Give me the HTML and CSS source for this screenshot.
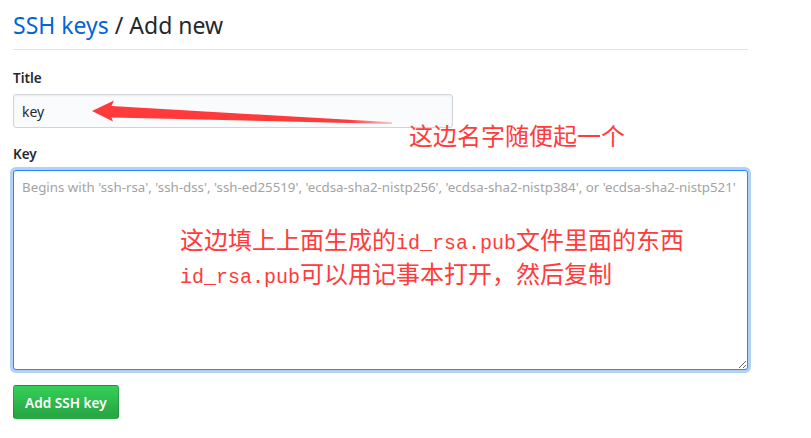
FILE: index.html
```html
<!DOCTYPE html>
<html lang="zh-CN">
<head>
<meta charset="utf-8">
<title>SSH keys / Add new</title>
<link rel="stylesheet" href="styles.css">
</head>
<body>
<div class="page">
  <h2 class="subhead"><a class="crumb" href="#">SSH keys</a> / Add new</h2>
  <form class="form">
    <div class="group">
      <label class="label" for="title">Title</label>
      <input class="input" id="title" type="text" value="key">
    </div>
    <div class="group group-key">
      <label class="label" for="key">Key</label>
      <textarea class="textarea" id="key" placeholder="Begins with 'ssh-rsa', 'ssh-dss', 'ssh-ed25519', 'ecdsa-sha2-nistp256', 'ecdsa-sha2-nistp384', or 'ecdsa-sha2-nistp521'"></textarea>
    </div>
    <button class="btn" type="button">Add SSH key</button>
  </form>

  <svg class="arrow" width="811" height="438" viewBox="0 0 811 438">
    <defs>
      <linearGradient id="fade" x1="92" y1="0" x2="394" y2="0" gradientUnits="userSpaceOnUse">
        <stop offset="0" stop-color="#ff3a3a"/>
        <stop offset="0.85" stop-color="#ff3a3a"/>
        <stop offset="1" stop-color="#ff3a3a" stop-opacity="0.25"/>
      </linearGradient>
    </defs>
    <polygon points="92,111 114,100.5 111.5,106 392,122.3 392,124 111.5,117.5 113,121.5" fill="url(#fade)"/>
  </svg>

  <div class="note note-title">这边名字随便起一个</div>
  <div class="note note-key">
    <div>这边填上上面生成的<span class="mono">id_rsa.pub</span>文件里面的东西</div>
    <div><span class="mono">id_rsa.pub</span>可以用记事本打开，然后复制</div>
  </div>
</div>
</body>
</html>
```

FILE: styles.css
```css
* { box-sizing: border-box; }

html, body {
  margin: 0;
  padding: 0;
  background: #fff;
}

body {
  font-family: "Noto Sans", "Liberation Sans", sans-serif;
  color: #24292e;
  font-size: 14px;
}

.page {
  position: relative;
  width: 811px;
  height: 438px;
  padding: 10px 0 0 13px;
  overflow: hidden;
}

.subhead {
  width: 735px;
  margin: 0;
  font-size: 23px;
  line-height: 30px;
  font-weight: 400;
  padding-bottom: 9px;
  border-bottom: 1px solid #e1e4e8;
}

.crumb {
  color: #0366d6;
  text-decoration: none;
}

.form {
  display: flex;
  flex-direction: column;
  align-items: flex-start;
}

.group {
  display: flex;
  flex-direction: column;
  margin-top: 18px;
}

.group-key {
  margin-top: 16px;
}

.label {
  font-weight: 600;
  font-size: 13.5px;
  line-height: 21px;
  margin-bottom: 5px;
}

.input {
  width: 440px;
  height: 34px;
  padding: 6px 8px;
  font-family: inherit;
  font-size: 14px;
  color: #24292e;
  background: #fafbfc;
  border: 1px solid #d1d5da;
  border-radius: 3px;
  box-shadow: inset 0 1px 2px rgba(27, 31, 35, 0.075);
  outline: none;
}

.textarea {
  width: 735px;
  height: 200px;
  padding: 6px 8px;
  font-family: inherit;
  font-size: 13.3px;
  line-height: 20px;
  color: #24292e;
  background: #fff;
  border: 1px solid #2188ff;
  border-radius: 3px;
  box-shadow: 0 0 0 3px rgba(3, 102, 214, 0.3);
  outline: none;
  resize: both;
}

.textarea::placeholder {
  color: #a3a3a3;
}

.btn {
  margin-top: 15px;
  height: 34px;
  padding: 0 11px;
  font-family: inherit;
  font-size: 13.6px;
  font-weight: 600;
  color: #fff;
  background: linear-gradient(#34d058, #28a745 90%);
  border: 1px solid rgba(27, 31, 35, 0.2);
  border-radius: 3px;
}

.arrow {
  position: absolute;
  left: 0;
  top: 0;
  pointer-events: none;
}

.note {
  position: absolute;
  color: #ff3b3b;
  font-family: "Noto Sans CJK SC", sans-serif;
  font-size: 24px;
  line-height: 29px;
  white-space: nowrap;
}

.note-title {
  left: 409px;
  top: 120px;
}

.note-key {
  left: 180px;
  top: 224px;
}

.mono {
  font-family: "Liberation Mono", monospace;
  font-size: 20px;
}
```
